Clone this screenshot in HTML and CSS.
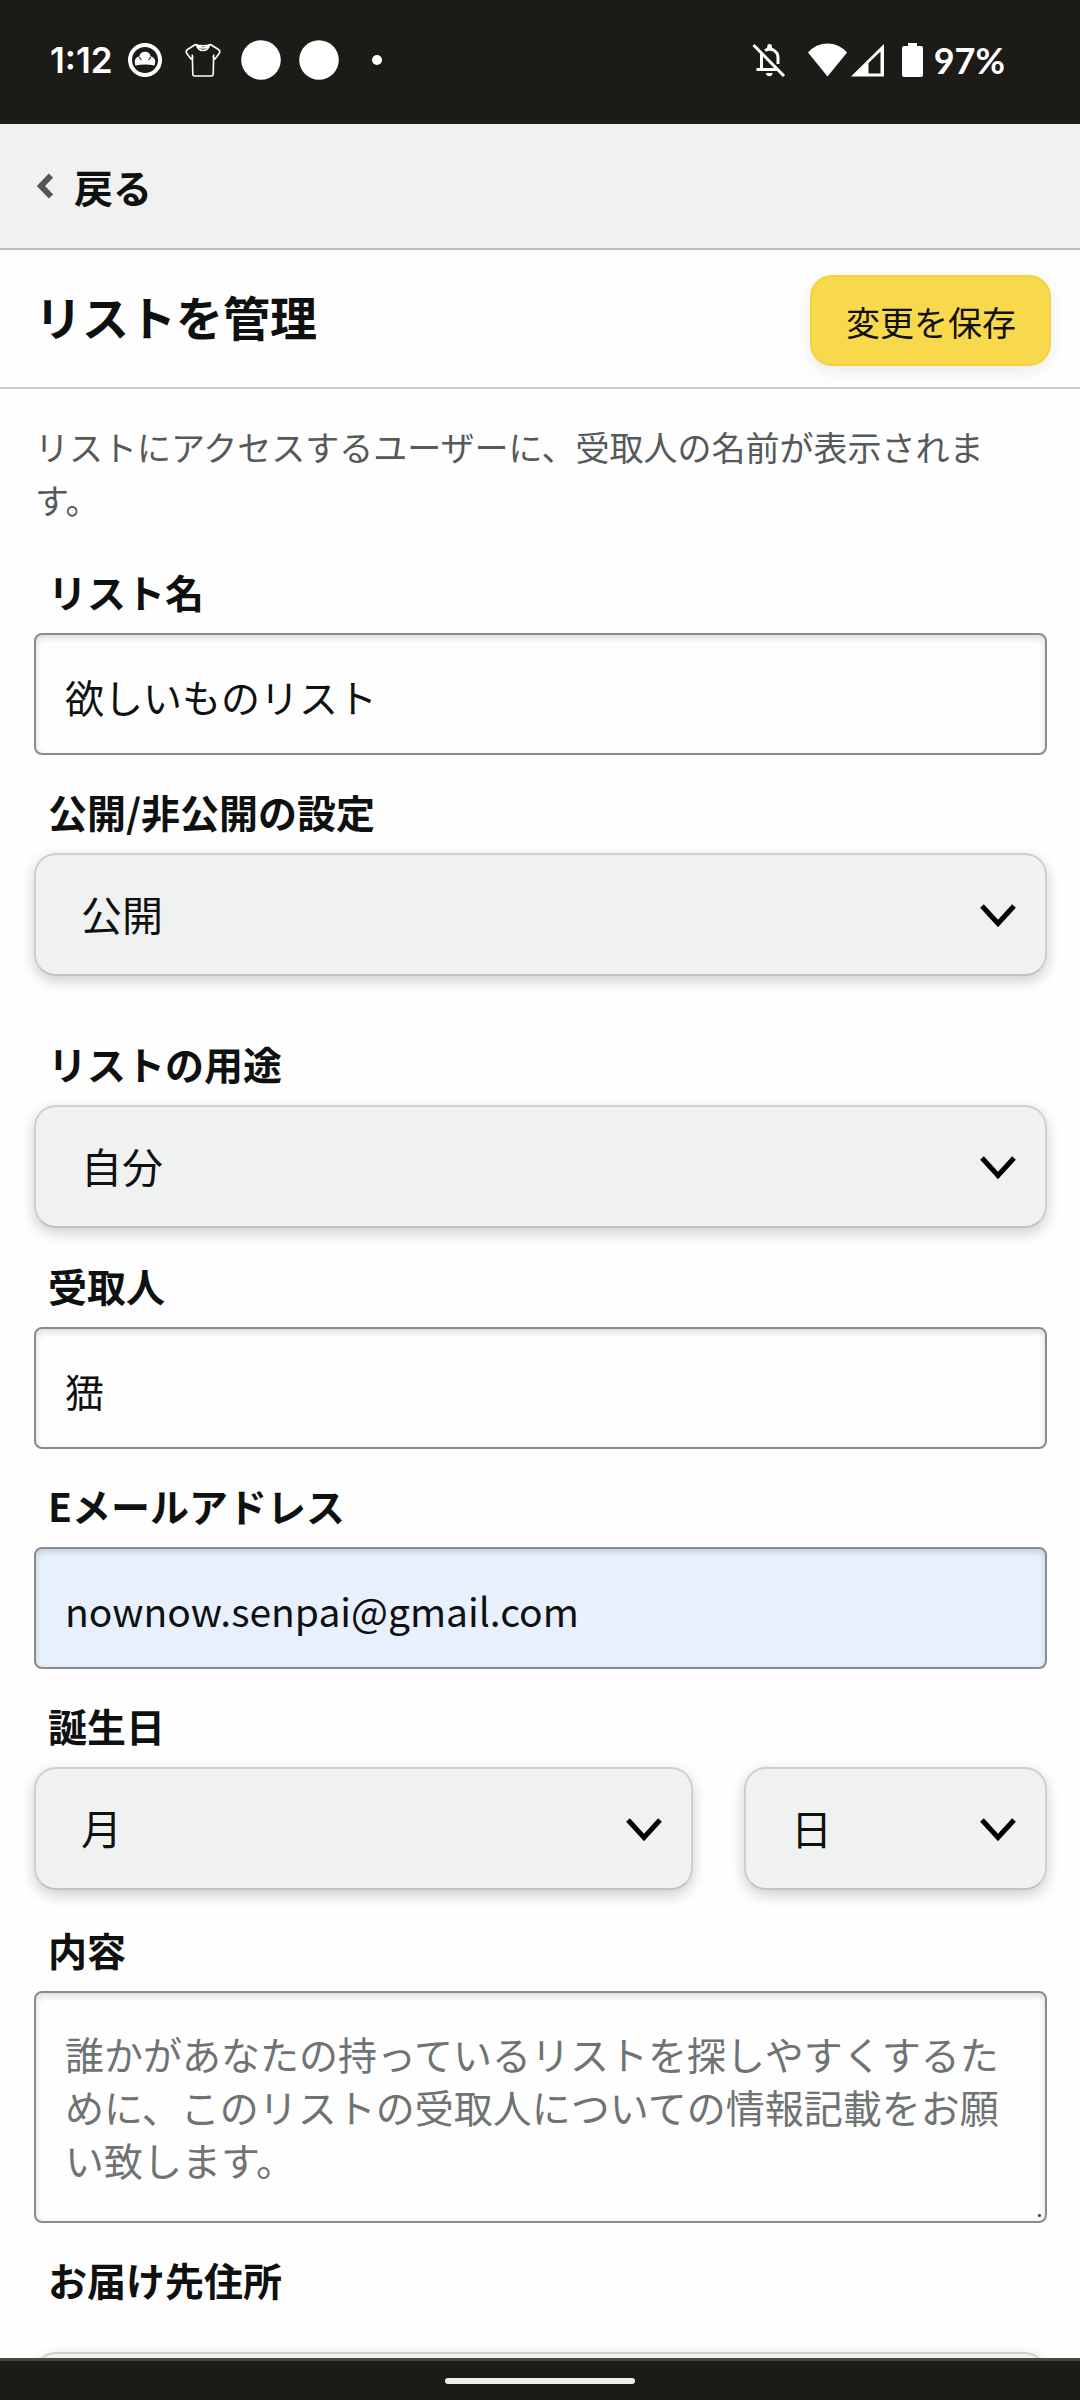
FILE: index.html
```html
<!DOCTYPE html>
<html lang="ja">
<head>
<meta charset="utf-8">
<meta name="viewport" content="width=device-width, initial-scale=1">
<title>リストを管理</title>
<link rel="stylesheet" href="styles.css">
</head>
<body>
<div class="status">
  <span class="status-time">1:12</span>
  <div class="status-apps">
    <svg viewBox="0 0 40 40" aria-hidden="true">
      <circle cx="20" cy="20" r="15" fill="none" stroke="#fff" stroke-width="4"/>
      <path fill="#fff" d="M10.500 25.500C8.500 20 11 16.500 14.500 16.500a5.500 4.800 0 0 1 11 0C29 16.500 31.500 20 29.500 25.500Q20 23.500 10.500 25.500Z"/>
      <path fill="none" stroke="#1d1b17" stroke-width="1.200" d="M14.500 17q.5 2.500 2 3M25.500 17q-.5 2.500-2 3"/>
    </svg>
    <svg viewBox="0 0 40 40" aria-hidden="true">
      <path fill="none" stroke="#fff" stroke-width="1.600" stroke-linejoin="round" stroke-linecap="round" d="M12.500 4.500 4.500 9.500Q2.500 11 3.500 13l4.500 6 2-2M27.500 4.500l8 5Q37.500 11 36.500 13L32 19l-2-2M9.300 15 9.800 34.500Q10 36 11.500 36h17Q30 36 30.200 34.500L30.700 15M12.500 4.500l2.500.8q5 1 10 0l2.500-.8M13.500 5Q15 10.500 20 10.500T26.500 5M15 5.500Q16.500 8 20 8t5-2.500"/>
    </svg>
    <svg viewBox="0 0 40 40" aria-hidden="true"><circle cx="20" cy="20" r="19.800" fill="#fff"/></svg>
    <svg viewBox="0 0 40 40" aria-hidden="true"><circle cx="20" cy="20" r="19.800" fill="#fff"/></svg>
    <svg viewBox="0 0 40 40" aria-hidden="true"><circle cx="20" cy="20" r="5" fill="#fff"/></svg>
  </div>
  <div class="status-system">
    <svg width="34" height="34" viewBox="0 0 34 34" aria-hidden="true">
      <g fill="none" stroke="#fff" stroke-width="3">
        <path d="M9.500 11v15M4.500 26.500h21"/>
        <path d="M13 7.500C19 4 26 8 26 15v6"/>
        <path d="M1.500 2 32 33"/>
      </g>
      <path fill="#fff" d="M15.200 6V3.500a2.400 2.400 0 0 1 4.800 0V6zM14 30h6.500a3.200 3.200 0 0 1-6.500 0z"/>
    </svg>
    <svg class="wifi" width="39" height="34" viewBox="0 0 39 34" aria-hidden="true"><path fill="#fff" d="M0 9.500Q8 .5 19.500 .5T39 9.500L19.500 33.500Z"/></svg>
    <svg width="33" height="34" viewBox="0 0 33 34" aria-hidden="true"><path fill="#fff" fill-rule="evenodd" d="M0 33.500 33 1V33.500ZM17.500 20V30.500H29.500V8.500Z"/></svg>
    <svg class="battery" width="21" height="34" viewBox="0 0 21 34" aria-hidden="true"><path fill="#fff" d="M6 0h9v3h4q2 0 2 2v27q0 2-2 2H2q-2 0-2-2V5q0-2 2-2h4z"/></svg>
    <span>97%</span>
  </div>
</div>

<nav class="back-bar">
  <a class="back" href="#">
    <svg width="17" height="26" viewBox="0 0 17 26" aria-hidden="true"><path fill="none" stroke="#555" stroke-width="6" d="M15 2.500 5 13 15 23.500"/></svg>
    <span>戻る</span>
  </a>
</nav>

<main class="page">
  <header class="title-row">
    <h1>リストを管理</h1>
    <button class="save" type="submit" form="list-form">変更を保存</button>
  </header>
  <p class="note">リストにアクセスするユーザーに、受取人の名前が表示されます。</p>

  <form class="form" id="list-form">
    <div class="field">
      <label for="list-name">リスト名</label>
      <input class="text" id="list-name" type="text" value="欲しいものリスト">
    </div>
    <div class="field field-spaced">
      <label for="privacy">公開/非公開の設定</label>
      <div class="select">
        <select id="privacy"><option>公開</option></select>
        <svg width="36" height="24" viewBox="0 0 36 24" aria-hidden="true"><path d="M2 3 18 20.500 34 3"/></svg>
      </div>
    </div>
    <div class="field">
      <label for="purpose">リストの用途</label>
      <div class="select">
        <select id="purpose"><option>自分</option></select>
        <svg width="36" height="24" viewBox="0 0 36 24" aria-hidden="true"><path d="M2 3 18 20.500 34 3"/></svg>
      </div>
    </div>
    <div class="field">
      <label for="recipient">受取人</label>
      <input class="text" id="recipient" type="text" value="峱">
    </div>
    <div class="field">
      <label for="email">Eメールアドレス</label>
      <input class="text text-filled" id="email" type="email" value="nownow.senpai@gmail.com">
    </div>
    <div class="field">
      <label for="month">誕生日</label>
      <div class="date">
        <div class="select">
          <select id="month"><option>月</option></select>
          <svg width="36" height="24" viewBox="0 0 36 24" aria-hidden="true"><path d="M2 3 18 20.500 34 3"/></svg>
        </div>
        <div class="select">
          <select id="day" aria-label="日"><option>日</option></select>
          <svg width="36" height="24" viewBox="0 0 36 24" aria-hidden="true"><path d="M2 3 18 20.500 34 3"/></svg>
        </div>
      </div>
    </div>
    <div class="field">
      <label for="about">内容</label>
      <textarea class="text" id="about" rows="3" placeholder="誰かがあなたの持っているリストを探しやすくするために、このリストの受取人についての情報記載をお願い致します。"></textarea>
    </div>
    <div class="field field-address">
      <label for="address">お届け先住所</label>
      <div class="select">
        <select id="address"><option></option></select>
      </div>
    </div>
  </form>
</main>

<div class="system-nav"><span class="handle"></span></div>
</body>
</html>
```
FILE: styles.css
```css
* {
  box-sizing: border-box;
}

body {
  margin: 0;
  height: 100vh;
  display: flex;
  flex-direction: column;
  background: #fefefe;
  color: #0f1111;
  font-family: "Noto Sans CJK JP", sans-serif;
  font-size: 39px;
  line-height: 53px;
}

/* Status bar */
.status {
  flex: none;
  display: flex;
  align-items: center;
  height: 124px;
  padding: 0 75px 4px 50px;
  background: #1d1b17;
  color: #fff;
  font-family: Lato, sans-serif;
  font-size: 36px;
  font-weight: 700;
}

.status-time {
  min-width: 75px;
  font-family: Inter, sans-serif;
  font-size: 35px;
  font-weight: 600;
}

.status-apps {
  display: flex;
  gap: 18px;
}

.status-apps svg {
  width: 40px;
  height: 40px;
}

.status-system {
  display: flex;
  align-items: center;
  margin-left: auto;
}

.wifi {
  margin: 0 4px 0 22px;
}

.battery {
  margin: 0 11px 0 18px;
}

/* Back link */
.back-bar {
  flex: none;
  display: flex;
  align-items: center;
  height: 126px;
  padding: 0 36px;
  background: #f1f1f1;
  border-bottom: 2px solid #bbbfbf;
}

.back {
  display: flex;
  align-items: center;
  gap: 21px;
  color: inherit;
  font-weight: 700;
  text-decoration: none;
}

/* Scrolling page */
.page {
  flex: 1;
  min-height: 0;
  overflow-y: auto;
  scrollbar-width: none;
}

.title-row {
  display: flex;
  align-items: center;
  justify-content: space-between;
  padding: 25px 29px 21px 35px;
  border-bottom: 2px solid #ccc;
}

h1 {
  margin: 0;
  padding-bottom: 10px;
  font-size: 47px;
  line-height: 60px;
}

.save {
  height: 91px;
  padding: 2px 33px 0 34px;
  border: 2px solid #f5d040;
  border-radius: 22px;
  background: #f8d94c;
  box-shadow: 0 5px 14px rgba(213, 217, 217, 0.5);
  color: inherit;
  font: inherit;
  font-size: 34px;
}

.note {
  margin: 31px 36px 39px 35px;
  color: #565959;
  font-size: 34px;
}

.form {
  display: flex;
  flex-direction: column;
  gap: 30px;
  padding: 0 33px 32px 34px;
}

.field {
  display: flex;
  flex-direction: column;
  gap: 15px;
}

.field-spaced {
  margin-bottom: 30px;
}

.field-address {
  gap: 46px;
}

label {
  padding-left: 14px;
  font-weight: 700;
}

.text {
  width: 100%;
  height: 122px;
  padding: 3px 29px 0;
  border: 2px solid #888c8c;
  border-radius: 8px;
  background: #fefefe;
  box-shadow: inset 0 3px 6px rgba(15, 17, 17, 0.15);
  color: inherit;
  font: inherit;
}

.text-filled {
  background: #e8effd;
}

textarea.text {
  display: block;
  height: 232px;
  padding: 34px 29px;
  resize: none;
  /* grip in the bottom right corner */
  background: #fefefe radial-gradient(circle, #444 1px, transparent 2px) right 3px bottom 3px / 5px 5px no-repeat;
}

.text::placeholder {
  color: #6f7373;
  opacity: 1;
}

.select {
  display: grid;
  align-items: center;
  margin-bottom: 1px;
}

.select > * {
  grid-area: 1 / 1;
}

.select select {
  appearance: none;
  width: 100%;
  height: 123px;
  padding: 0 80px 2px 45px;
  border: 2px solid #cdd0d0;
  border-bottom-color: #bfc2c2;
  border-radius: 22px;
  background: #f0f2f2;
  box-shadow: 0 5px 14px rgba(15, 17, 17, 0.2);
  color: inherit;
  font: inherit;
  font-size: 41px;
}

.select svg {
  justify-self: end;
  margin-right: 31px;
  fill: none;
  stroke: #000;
  stroke-width: 5;
  pointer-events: none;
}

.date {
  display: grid;
  grid-template-columns: 659fr 303fr;
  gap: 51px;
  padding-bottom: 2px;
}

/* Gesture bar */
.system-nav {
  flex: none;
  display: flex;
  justify-content: center;
  align-items: center;
  height: 42px;
  border-top: 3px solid #4b473a;
  background: #1d1b17;
}

.handle {
  width: 190px;
  height: 6px;
  border-radius: 3px;
  background: #eee;
}
```
